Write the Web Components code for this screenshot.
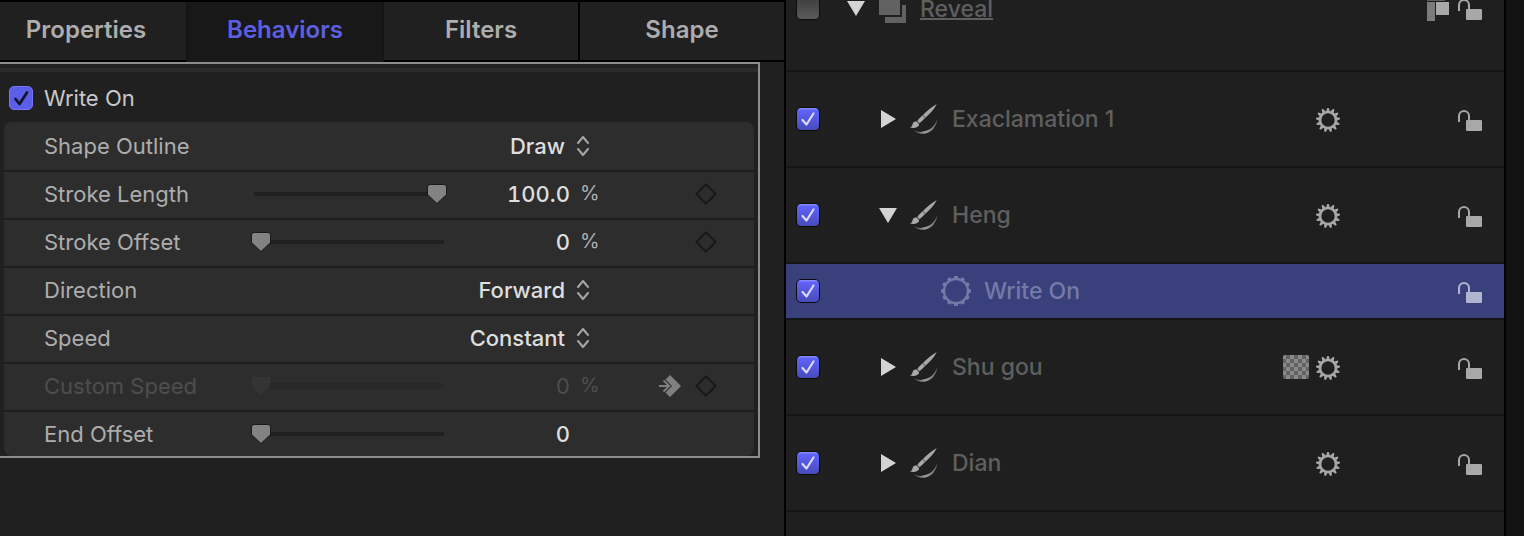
<!DOCTYPE html>
<html lang="en">
<head>
<meta charset="utf-8">
<title>Inspector</title>
<style>
html, body { height: 100%; margin: 0; background: #202020; }
body { font-family: Inter, "Liberation Sans", sans-serif; font-size: 22px; line-height: 28px; color: #adadad; overflow: hidden; }
</style>
</head>
<body>
<motion-app>
  <inspector-panel slot="inspector">
    <inspector-tabs slot="tabs"></inspector-tabs>
    <behavior-group heading="Write On">
      <param-row label="Shape Outline" kind="menu" value="Draw"></param-row>
      <param-row label="Stroke Length" kind="slider" value="100.0" position="100" unit="%" keyframe></param-row>
      <param-row label="Stroke Offset" kind="slider" value="0" position="0" unit="%" keyframe></param-row>
      <param-row label="Direction" kind="menu" value="Forward"></param-row>
      <param-row label="Speed" kind="menu" value="Constant"></param-row>
      <param-row label="Custom Speed" kind="slider" value="0" position="0" unit="%" keyframe jump disabled></param-row>
      <param-row label="End Offset" kind="slider" value="0" position="0"></param-row>
    </behavior-group>
  </inspector-panel>
  <layer-list slot="layers">
    <layer-row name="Reveal" level="0" icon="group" open group unchecked></layer-row>
    <layer-row name="Exaclamation 1" level="1" icon="brush" closed gear></layer-row>
    <layer-row name="Heng" level="1" icon="brush" open gear></layer-row>
    <layer-row name="Write On" level="2" icon="behavior" selected></layer-row>
    <layer-row name="Shu gou" level="1" icon="brush" closed gear mask></layer-row>
    <layer-row name="Dian" level="1" icon="brush" closed gear></layer-row>
  </layer-list>
</motion-app>

<script>
function gearPath(c, teeth, tip, root, wTip, wRoot) {
  let d = '';
  const p = (r, a) => (c + r * Math.sin(a)).toFixed(2) + ' ' + (c - r * Math.cos(a)).toFixed(2);
  for (let i = 0; i < teeth; i++) {
    const a = i * 2 * Math.PI / teeth;
    d += `M${p(root, a - wRoot)}L${p(tip, a - wTip)}L${p(tip, a + wTip)}L${p(root, a + wRoot)}Z`;
  }
  return d;
}

const ICONS = {
  gear: `<svg width="24" height="24" viewBox="0 0 24 24" fill="currentColor"><circle cx="12" cy="12" r="8" fill="none" stroke="currentColor" stroke-width="2.600"/><path d="${gearPath(12, 13, 12.3, 8.6, .06, .22)}"/></svg>`,
  behavior: `<svg width="30" height="30" viewBox="0 0 30 30" fill="currentColor"><circle cx="15" cy="15" r="12" fill="none" stroke="currentColor" stroke-width="2.400"/><path d="${gearPath(15, 12, 15, 12.4, .12, .18)}"/></svg>`,
  brush: `<svg width="28" height="30" viewBox="0 0 28 30"><defs><linearGradient id="s" x1="0" x2="1"><stop offset="0" stop-color="#3c3c3c"/><stop offset=".45" stop-color="#a0a0a0"/><stop offset="1" stop-color="#6c6c6c"/></linearGradient></defs><path fill="url(#s)" d="M3.500 26.200Q8 28.600 13.500 27.600Q23.500 25.500 27.300 15.500Q27 20.500 23.300 25Q19 29.700 12.500 29.700Q7 29.600 3.500 26.200Z"/><path fill="#a8a8a8" d="M26.700 0C22 2.800 17.500 6.300 12.900 10.900L15.500 13.700C20 9.600 24 5.600 26.700 0ZM12.500 11.300C10.400 13.300 8.500 15.100 7.300 16.900L9.500 19.300C11.300 17.800 13.300 16 15.100 14.100ZM6.800 17.600C4 17 2.600 18.800 2.500 20.600C2.400 22.200 1.300 22.800 0 23.600C3 24.400 6 24 7.900 22.500C9 21.500 9.300 20.600 9 19.900Z"/></svg>`,
  group: `<svg width="27" height="30" viewBox="0 0 27 30" fill="#626262"><path d="M0 4H21V22H0ZM23 12H27V30H6V24H23Z"/></svg>`,
  lock: `<svg width="24" height="22" viewBox="0 0 24 22"><path d="M1 12V6A5 5 0 0 1 11 6V11" fill="none" stroke="currentColor" stroke-width="2"/><rect x="8" y="10" width="16" height="11" rx="1" fill="currentColor"/></svg>`,
  flag: `<svg width="22" height="30" viewBox="0 0 22 30"><path fill="#5e5e5e" d="M0 0H18V8H0Z"/><path fill="#7b7b7b" d="M0 9H8V28H0Z"/><path fill="#a8a8a8" d="M9 9H22V22H9Z"/></svg>`,
  mask: `<svg width="26" height="24" viewBox="0 0 26 24"><defs><pattern id="c" width="8" height="8" patternUnits="userSpaceOnUse" x="-1"><path fill="#636363" d="M0 0H8V8H0Z"/><path fill="#898989" d="M0 0H4V4H0ZM4 4H8V8H4Z"/></pattern></defs><rect width="26" height="24" rx="2" fill="url(#c)"/></svg>`,
  right: `<svg width="16" height="18" viewBox="0 0 16 18"><path fill="#d4d4d4" d="M1 0L16 9L1 18Z"/></svg>`,
  down: `<svg width="18" height="15" viewBox="0 0 18 15"><path fill="#d4d4d4" d="M0 0H18L9 15Z"/></svg>`,
  updown: `<svg width="12" height="20" viewBox="0 0 12 20" fill="none" stroke="#a6a6a6" stroke-width="2" stroke-linecap="round" stroke-linejoin="round"><path d="M1 7L6 1L11 7M1 13L6 19L11 13"/></svg>`,
  diamond: `<svg width="22" height="22" viewBox="0 0 22 22"><path d="M11 1.400L20.600 11L11 20.600L1.400 11Z" fill="none" stroke="#181818" stroke-width="2"/></svg>`,
  jump: `<svg width="22" height="22" viewBox="0 0 22 22"><path fill="#808080" d="M11 0L22 11L11 22L6.500 17.500L13 11L6.500 4.500Z"/><path d="M0 11H10M4.500 5.500L10.300 11L4.500 16.500" fill="none" stroke="#808080" stroke-width="1.800"/></svg>`
};

const RESET = `
  * { box-sizing: border-box; }
  button, input, select { font: inherit; color: inherit; margin: 0; padding: 0; border: 0; background: none; appearance: none; border-radius: 0; }
  button { display: grid; place-items: center; }
  svg { display: block; flex: none; }
`;

class Base extends HTMLElement {
  connectedCallback() {
    if (this.shadowRoot) return;
    this.attachShadow({ mode: 'open' }).innerHTML = `<style>${RESET}${this.css()}</style>${this.html()}`;
  }
}

customElements.define('motion-app', class extends Base {
  css() { return `
    :host { display: grid; grid-template-columns: minmax(0, 786fr) minmax(0, 720fr) 18px; min-height: 100%; height: 100vh; }
    .left { border-right: 2px solid #000; overflow: hidden; }
    .right { border-right: 2px solid #000; background: #1f1f1f; overflow: hidden; }
    .gutter { background: #131313; }`; }
  html() { return `<div class="left"><slot name="inspector"></slot></div><div class="right"><slot name="layers"></slot></div><div class="gutter"></div>`; }
});

customElements.define('inspector-panel', class extends Base {
  css() { return `:host { display: block; }`; }
  html() { return `<slot name="tabs"></slot><slot></slot>`; }
});

customElements.define('inspector-tabs', class extends Base {
  css() { return `
    :host { display: block; border-top: 2px solid #000; }
    nav { display: grid; grid-template-columns: 186fr 198fr 196fr 204fr; height: 60px; }
    button { font-size: 24px; font-weight: 600; border-bottom: 2px solid #000; padding-bottom: 2px; }
    button:first-child { padding-right: 14px; }
    .active { background: #181818; color: #5c5fe2; border: solid #141414; border-width: 0 2px; padding-bottom: 4px; }
    .ruled { border-right: 2px solid #000; }`; }
  html() { return `<nav role="tablist">
    <button role="tab">Properties</button><button role="tab" class="active" aria-selected="true">Behaviors</button><button role="tab" class="ruled">Filters</button><button role="tab">Shape</button></nav>`; }
});

customElements.define('behavior-group', class extends Base {
  css() { return `
    :host { display: block; margin-right: 24px; border: solid #8c8c8c; border-width: 2px 2px 2px 0; padding-top: 4px; }
    header { display: flex; align-items: center; gap: 11px; height: 54px; padding: 2px 9px 0; border-top: 4px solid #2b2b2b; color: #c8c8c8; }
    input { width: 24px; height: 24px; border-radius: 5px; border: 1px solid #7376f0; background: #5b5ee8; }
    input:checked { background: #5b5ee8 url("data:image/svg+xml,%3Csvg xmlns='http://www.w3.org/2000/svg' viewBox='0 0 22 22'%3E%3Cpath d='M5.500 12L9.500 17L17 5.500' fill='none' stroke='%23141428' stroke-width='2.800' stroke-linecap='round' stroke-linejoin='round'/%3E%3C/svg%3E") center / 22px no-repeat; }
    .card { margin: 0 4px; padding-top: 2px; background: #2d2d2d; border-radius: 8px; }`; }
  html() { return `<header><input type="checkbox" id="on" checked><label for="on">${this.getAttribute('heading')}</label></header><div class="card"><slot></slot></div>`; }
});

customElements.define('param-row', class extends Base {
  css() { return `
    :host { display: block; border-bottom: 2px solid #1f1f1f; padding-bottom: 2px; }
    :host(:last-child) { border: 0; padding: 0; }
    .row { display: grid; grid-template-columns: 207px 196px 123px 40px 1fr auto; align-items: center; height: 44px; padding: 0 37px 0 40px; }
    .value { grid-column: 3; color: #dedede; font-weight: 500; font-variant-numeric: tabular-nums; text-align: right; min-width: 0; width: 100%; }
    .menu { grid-column: 2 / 5; display: flex; align-items: center; justify-content: flex-end; gap: 12px; padding-right: 21px; color: #dedede; font-weight: 500; }
    select { text-align-last: right; }
    .unit { font-size: 20px; line-height: 24px; padding: 0 0 2px 10px; }
    .keys { grid-column: 6; display: flex; gap: 14px; }
    input[type=range] { width: 100%; height: 20px; background: linear-gradient(#202020, #202020) center / calc(100% - 6px) 4px no-repeat; }
    input[type=range]::-webkit-slider-thumb { appearance: none; width: 20px; height: 20px; background: url("data:image/svg+xml,%3Csvg xmlns='http://www.w3.org/2000/svg' viewBox='0 0 20 20'%3E%3Cpath d='M3 .500H17Q19.500 .500 19.500 3V10.500L10 19.500L.500 10.500V3Q.500 .500 3 .500Z' fill='%23838383' stroke='%231a1a1a'/%3E%3C/svg%3E") center / 20px no-repeat; }
    :host([disabled]) .row { color: #4e4e4e; }
    :host([disabled]) .value { color: #4e4e4e; font-weight: 400; }
    :host([disabled]) input[type=range] { background: linear-gradient(#282828, #282828) center / calc(100% - 6px) 6px no-repeat; }
    :host([disabled]) input[type=range]::-webkit-slider-thumb { background-image: url("data:image/svg+xml,%3Csvg xmlns='http://www.w3.org/2000/svg' viewBox='0 0 20 20'%3E%3Cpath d='M1 1H19V10.500L10 19L1 10.500Z' fill='%23343434'/%3E%3C/svg%3E"); }`; }
  html() {
    const a = n => this.getAttribute(n), h = n => this.hasAttribute(n), off = h('disabled') ? 'disabled' : '';
    const control = a('kind') === 'menu'
      ? `<div class="menu"><select id="v"><option>${a('value')}</option></select>${ICONS.updown}</div>`
      : `<input type="range" aria-label="${a('label')} slider" min="0" max="100" value="${a('position')}" ${off}><input class="value" id="v" value="${a('value')}" ${off}>${h('unit') ? `<span class="unit">${a('unit')}</span>` : ''}`;
    const keys = h('keyframe') ? `<div class="keys">${h('jump') ? `<button aria-label="Go to related parameter">${ICONS.jump}</button>` : ''}<button aria-label="Keyframe">${ICONS.diamond}</button></div>` : '';
    return `<div class="row"><label for="v">${a('label')}</label>${control}${keys}</div>`;
  }
});

customElements.define('layer-list', class extends Base {
  css() { return `:host { display: block; margin-top: -24px; }`; }
  html() { return `<slot></slot>`; }
});

customElements.define('layer-row', class extends Base {
  css() { return `
    :host { display: block; border-bottom: 2px solid #151515; color: #a8a8a8; }
    .row { display: flex; align-items: center; height: 94px; padding: 0 22px 0 10px; }
    :host([group]) { padding-bottom: 30px; }
    :host([group]) .row { height: 64px; }
    :host([selected]) { background: #39407c; color: #b2b5d2; }
    :host([selected]) .row { height: 54px; }
    input { flex: none; width: 24px; height: 24px; border: 1px solid #0c0c0c; border-radius: 5px; background: linear-gradient(#3c3c3c, #5c5c5c); }
    input:checked { background: url("data:image/svg+xml,%3Csvg xmlns='http://www.w3.org/2000/svg' viewBox='0 0 22 22'%3E%3Cpath d='M5.500 12L9.500 16.500L16.500 5.500' fill='none' stroke='%23d8d8fa' stroke-width='2.200' stroke-linecap='round' stroke-linejoin='round'/%3E%3C/svg%3E") center / 22px no-repeat, linear-gradient(#8588ff 0 1px, #6063fa 2px, #474bb8); }
    .indent { flex: none; width: calc(20px + 32px * var(--level)); }
    .twist { flex: none; width: 32px; height: 32px; display: grid; place-items: center; }
    .icon { flex: none; width: 40px; display: grid; place-items: center; margin-right: 8px; }
    .name { flex: 1; min-width: 0; white-space: nowrap; color: #5f5f5f; font-size: 23px; font-weight: 500; }
    :host([group]) .name { padding-top: 2px; text-decoration: underline; text-decoration-thickness: 2px; text-underline-offset: 1px; text-decoration-skip-ink: none; }
    :host([selected]) .name, :host([selected]) .icon { color: #747aa8; }
    .mask { margin-right: 7px; }
    .gear { margin-right: 118px; padding-top: 2px; }
    .flag { margin-right: 9px; }
    .lock { padding-top: 3px; }`; }
  html() {
    const h = n => this.hasAttribute(n), name = this.getAttribute('name');
    const twist = h('open') ? ICONS.down : h('closed') ? ICONS.right : '';
    return `<div class="row" style="--level:${this.getAttribute('level')}">
      <input type="checkbox" aria-label="Enable ${name}" ${h('unchecked') ? '' : 'checked'}>
      <span class="indent"></span>
      ${twist ? `<button class="twist" aria-label="Toggle ${name}">${twist}</button>` : '<span class="twist"></span>'}
      <span class="icon">${ICONS[this.getAttribute('icon')]}</span>
      <span class="name">${name}</span>
      ${h('mask') ? `<span class="mask">${ICONS.mask}</span>` : ''}
      ${h('gear') ? `<button class="gear" aria-label="Behaviors of ${name}">${ICONS.gear}</button>` : ''}
      ${h('group') ? `<span class="flag">${ICONS.flag}</span>` : ''}
      <button class="lock" aria-label="Lock ${name}">${ICONS.lock}</button>
    </div>`;
  }
});
</script>
</body>
</html>
